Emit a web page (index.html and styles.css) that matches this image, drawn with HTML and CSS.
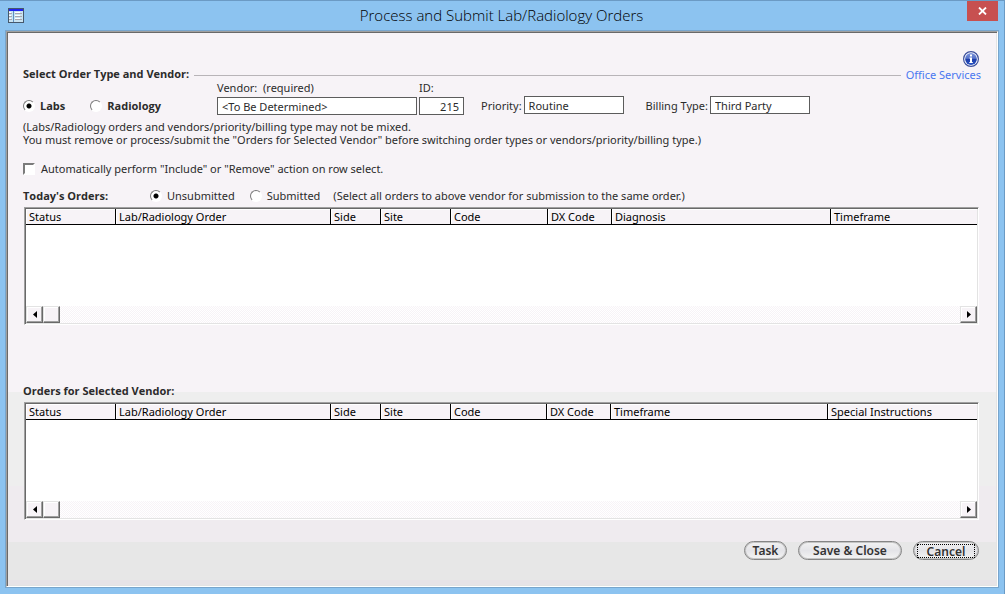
FILE: index.html
```html
<!DOCTYPE html>
<html lang="en">
<head>
  <meta charset="UTF-8" />
  <meta name="viewport" content="width=device-width, initial-scale=1.0"/>
  <title>Process and Submit Lab/Radiology Orders</title>
  <link rel="stylesheet" href="styles.css">
</head>
<body>
  <div class="window">
    <header class="titlebar">
      <svg class="app-icon" width="16" height="15" viewBox="0 0 16 15" shape-rendering="crispEdges">
        <rect width="16" height="15" fill="#46586c"/>
        <rect x="1" y="1" width="14" height="2" fill="#2222f0"/>
        <rect x="1" y="3" width="14" height="11" fill="#c9e3f2"/>
        <rect x="5" y="3" width="1" height="11" fill="#5f8fc0"/>
        <path d="M1 5h3v1H1zM1 8h3v1H1zM1 11h3v1H1zM7 5h7v1H7zM7 8h7v1H7zM7 11h7v1H7z" fill="#a9a6ae"/>
        <path d="M1 4h2v1H1zM1 7h2v1H1zM1 10h2v1H1zM7 4h5v1H7zM7 7h5v1H7zM7 10h5v1H7z" fill="#fff"/>
      </svg>
      <h1>Process and Submit Lab/Radiology Orders</h1>
      <button class="close" aria-label="Close">
        <svg width="9" height="8" viewBox="0 0 9 8"><path d="M1 .5l7 7M8 .5l-7 7" stroke="#fff" stroke-width="1.8"/></svg>
      </button>
    </header>

    <main class="panel">
      <div class="section-head">
        <h2>Select Order Type and Vendor:</h2>
        <span class="rule"></span>
        <a href="#" class="office">
          <svg width="16" height="16" viewBox="0 0 16 16">
            <defs>
              <linearGradient id="info" x1="0" y1="0" x2="0" y2="1">
                <stop offset="0" stop-color="#7d94dc"/>
                <stop offset=".45" stop-color="#5672c8"/>
                <stop offset=".5" stop-color="#1d3ca8"/>
                <stop offset="1" stop-color="#2c55c4"/>
              </linearGradient>
            </defs>
            <circle cx="8" cy="8" r="7.4" fill="#fff" stroke="#3c4f9c" stroke-width="1.2"/>
            <circle cx="8" cy="8" r="5.9" fill="url(#info)"/>
            <path d="M7 3.5h2v2H7zM6.5 6.5H9V11h.8v1H6.3v-1H7V7.500h-.5z" fill="#fff"/>
          </svg>
          <span>Office Services</span>
        </a>
      </div>

      <div class="vendor-row">
        <div class="order-type">
          <label class="option"><input type="radio" name="type" checked> Labs</label>
          <label class="option"><input type="radio" name="type"> Radiology</label>
        </div>
        <div class="stack vendor">
          <label for="vendor">Vendor:&nbsp; (required)</label>
          <input type="text" id="vendor" value="&lt;To Be Determined&gt;">
        </div>
        <div class="stack vendor-id">
          <label for="vendorId">ID:</label>
          <input type="text" id="vendorId" value="215">
        </div>
        <div class="inline-field priority">
          <label for="priority">Priority:</label>
          <input type="text" id="priority" value="Routine">
        </div>
        <div class="inline-field billing">
          <label for="billing">Billing Type:</label>
          <input type="text" id="billing" value="Third Party">
        </div>
      </div>

      <p class="note">(Labs/Radiology orders and vendors/priority/billing type may not be mixed.<br>
        You must remove or process/submit the "Orders for Selected Vendor" before switching order types or vendors/priority/billing type.)</p>

      <label class="auto"><input type="checkbox"> Automatically perform "Include" or "Remove" action on row select.</label>

      <div class="orders-head">
        <h2>Today's Orders:</h2>
        <label class="option"><input type="radio" name="state" checked> Unsubmitted</label>
        <label class="option"><input type="radio" name="state"> Submitted</label>
        <span class="hint">(Select all orders to above vendor for submission to the same order.)</span>
      </div>

      <div class="grid today">
        <table>
          <colgroup>
            <col class="c-status"><col class="c-order"><col class="c-side"><col class="c-site"><col class="c-code"><col class="c-dx"><col class="c-wide"><col>
          </colgroup>
          <thead>
            <tr><th>Status</th><th>Lab/Radiology Order</th><th>Side</th><th>Site</th><th>Code</th><th>DX Code</th><th>Diagnosis</th><th>Timeframe</th></tr>
          </thead>
        </table>
        <div class="scrollbar">
          <button aria-label="Scroll left"><svg width="4" height="7" viewBox="0 0 4 7"><path d="M4 0v7L0 3.500z"/></svg></button>
          <span class="thumb"></span>
          <button class="right" aria-label="Scroll right"><svg width="4" height="7" viewBox="0 0 4 7"><path d="M0 0v7l4-3.500z"/></svg></button>
        </div>
      </div>

      <h2>Orders for Selected Vendor:</h2>
      <div class="grid">
        <table>
          <colgroup>
            <col class="c-status"><col class="c-order"><col class="c-side"><col class="c-site"><col class="c-code-sm"><col class="c-dx"><col class="c-time"><col>
          </colgroup>
          <thead>
            <tr><th>Status</th><th>Lab/Radiology Order</th><th>Side</th><th>Site</th><th>Code</th><th>DX Code</th><th>Timeframe</th><th>Special Instructions</th></tr>
          </thead>
        </table>
        <div class="scrollbar">
          <button aria-label="Scroll left"><svg width="4" height="7" viewBox="0 0 4 7"><path d="M4 0v7L0 3.500z"/></svg></button>
          <span class="thumb"></span>
          <button class="right" aria-label="Scroll right"><svg width="4" height="7" viewBox="0 0 4 7"><path d="M0 0v7l4-3.500z"/></svg></button>
        </div>
      </div>

      <div class="actions">
        <button class="pill">Task</button>
        <button class="pill wide">Save &amp; Close</button>
        <button class="pill focused"><span>Cancel</span></button>
      </div>
    </main>
  </div>
</body>
</html>
```
FILE: styles.css
```css
* {
  box-sizing: border-box;
}
body {
  margin: 0;
  font-family: "Noto Sans", sans-serif;
  font-size: 11px;
  line-height: 13px;
  color: #2b2b2b;
}
h1, h2, p {
  margin: 0;
}
h2 {
  font-family: "Open Sans", sans-serif;
  font-size: 11px;
  font-weight: 700;
  line-height: 13px;
}
button {
  padding: 0;
  font-family: inherit;
}
.window {
  min-height: 100vh;
  display: flex;
  flex-direction: column;
  padding: 0 6px 7px;
  background: #8cc3f0;
  border-top: 1px solid #6b9ac4;
  border-right: 1px solid #6b9ac4;
}

/* title bar */
.titlebar {
  display: flex;
  height: 30px;
  align-items: center;
  padding-left: 2px;
}
.app-icon {
  margin: 0 12px 2px 0;
}
.titlebar h1 {
  flex: 1;
  text-align: center;
  font-family: "Open Sans", sans-serif;
  font-size: 15px;
  font-weight: 300;
  line-height: 20px;
  margin-bottom: 2px;
  color: #000;
}
.close {
  align-self: flex-start;
  display: flex;
  align-items: center;
  justify-content: center;
  width: 31px;
  height: 20px;
  border: none;
  background: #c75050;
}

/* main panel */
.panel {
  flex: 1;
  padding: 19px 16px 24px;
  border: 1px solid;
  border-color: #a0a0a0 #fff #fff #a0a0a0;
  outline: 1px solid #78a5cc;
  box-shadow: inset 1px 1px #696969, inset -1px -1px #e3e3e3;
  background: linear-gradient(#f7f3f7 65%, #eee 65%, #eee 82%, #efebef 82%, #efebef 92%, #e7e7e7 92%, #e7e7e7 99%, #e7e3e7 99%);
}
.section-head {
  display: flex;
  align-items: flex-end;
  gap: 5px;
}
.section-head h2 {
  margin-bottom: 1px;
}
.rule {
  flex: 1;
  height: 1px;
  margin-bottom: 5px;
  background: #b8b4b8;
}
.office {
  display: flex;
  flex-direction: column;
  align-items: flex-end;
  gap: 1px;
  color: #4a78f0;
  text-decoration: none;
}
.office svg {
  margin-right: 2px;
}
.vendor-row {
  display: flex;
  align-items: flex-end;
}
.order-type {
  display: flex;
  width: 194px;
  gap: 25px;
  padding-bottom: 3px;
  font-family: "Open Sans", sans-serif;
  font-weight: 700;
}
.option {
  display: flex;
  align-items: center;
  gap: 5px;
}
.stack {
  display: flex;
  flex-direction: column;
  gap: 3px;
}
.vendor {
  width: 200px;
}
.vendor-id {
  width: 45px;
  margin-left: 2px;
}
.inline-field {
  display: flex;
  align-items: center;
  gap: 2px;
  margin-bottom: 1px;
}
.priority {
  margin-left: 17px;
}
.billing {
  margin-left: 22px;
}
.inline-field input {
  width: 100px;
}
input[type="text"] {
  height: 18px;
  padding: 0 4px;
  border: 1px solid #5c5c5c;
  background: #fff;
  font: inherit;
  color: #2b2b2b;
}
#vendorId {
  text-align: right;
}
input[type="radio"],
input[type="checkbox"] {
  appearance: none;
  flex: none;
  width: 12px;
  height: 12px;
  margin: 0;
  border: 2px solid;
  border-color: #7b7b7b #fff #fff #7b7b7b;
  background: #fff;
}
input[type="radio"] {
  border-width: 1px;
  border-radius: 50%;
}
input[type="radio"]:checked {
  background: radial-gradient(circle, #000 2px, #fff 3px);
}
.note {
  margin-top: 5px;
}
.auto {
  display: flex;
  align-items: center;
  gap: 6px;
  margin-top: 16px;
}
.orders-head {
  display: flex;
  align-items: center;
  margin-top: 14px;
}
.orders-head h2 {
  width: 127px;
}
.orders-head .option + .option {
  margin-left: 15px;
}
.hint {
  margin-left: 13px;
}

/* order lists */
.grid {
  display: flex;
  flex-direction: column;
  min-height: 118px;
  margin: 5px 2px 0 1px;
  border: 1px solid;
  border-color: #a0a0a0 #fff #fff #a0a0a0;
  padding: 1px;
  box-shadow: inset 1px 1px #696969, inset -1px -1px #e3e3e3;
  background: #fff;
}
.today {
  margin-bottom: 59px;
}
table {
  width: 100%;
  table-layout: fixed;
  border-collapse: separate;
  border-spacing: 0;
  color: #000;
}
th {
  height: 16px;
  padding: 0 3px;
  border-right: 1px solid #000;
  border-bottom: 1px solid #000;
  background: #f7f3f7;
  box-shadow: inset 1px 1px #fff;
  font-weight: 400;
  text-align: left;
  white-space: nowrap;
}
th:last-child {
  border-right: none;
}
.c-status { width: 90px; }
.c-order { width: 215px; }
.c-side { width: 50px; }
.c-site { width: 70px; }
.c-code { width: 97px; }
.c-code-sm { width: 96px; }
.c-dx { width: 64px; }
.c-wide { width: 219px; }
.c-time { width: 217px; }
.scrollbar {
  display: flex;
  height: 17px;
  margin-top: auto;
  background: repeating-conic-gradient(#f7f3f7 0 25%, #fff 0 50%) 0 0 / 2px 2px;
}
.scrollbar button,
.thumb {
  display: flex;
  align-items: center;
  justify-content: center;
  width: 17px;
  border: 1px solid;
  border-color: #e3e3e3 #696969 #696969 #e3e3e3;
  box-shadow: inset -1px -1px #a0a0a0, inset 1px 1px #fff;
  background: #f7f3f7;
}
.scrollbar .right {
  margin-left: auto;
}

/* bottom buttons */
.actions {
  display: flex;
  justify-content: flex-end;
  gap: 11px;
  margin: 21px 2px 0 0;
}
.pill {
  width: 43px;
  height: 19px;
  border: 1px solid #858585;
  border-radius: 10px;
  background: linear-gradient(#f2f2f2, #e4e4e8 50%, #f4f4f4);
  box-shadow: inset 0 0 0 1px #c4c4c4;
  font-size: 12px;
  font-weight: 600;
  line-height: 16px;
  color: #333;
}
.wide {
  width: 104px;
}
.focused {
  width: 66px;
  padding: 0 3px;
}
.focused span {
  display: block;
  height: 14px;
  border: 1px dotted #000;
  line-height: 14px;
}
```
